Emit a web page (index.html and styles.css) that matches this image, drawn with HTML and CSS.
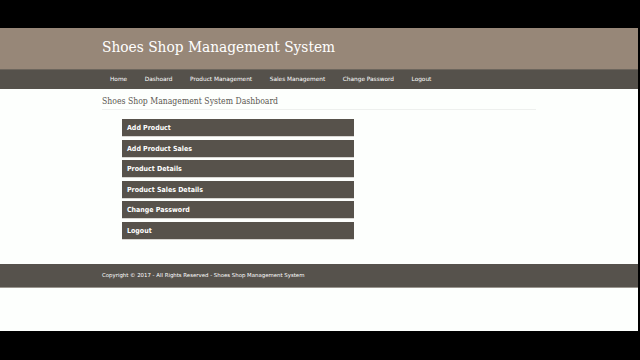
FILE: index.html
```html
<!DOCTYPE html>
<html lang="en">
<head>
  <meta charset="UTF-8" />
  <title>Shoes Shop Management System</title>
  <link rel="stylesheet" href="styles.css">
</head>
<body>
  <div class="frame">
    <div class="page">
      <div class="header">
        <div class="wrap"><h1>Shoes Shop Management System</h1></div>
      </div>
      <div class="nav">
        <div class="wrap">
          <a href="#">Home</a>
          <a href="#">Dashoard</a>
          <a href="#">Product Management</a>
          <a href="#">Sales Management</a>
          <a href="#">Change Password</a>
          <a href="#">Logout</a>
        </div>
      </div>
      <div class="content">
        <div class="wrap">
          <h2>Shoes Shop Management System Dashboard</h2>
          <div class="menu">
            <a href="#">Add Product</a>
            <a href="#">Add Product Sales</a>
            <a href="#">Product Details</a>
            <a href="#">Product Sales Details</a>
            <a href="#">Change Password</a>
            <a href="#">Logout</a>
          </div>
        </div>
      </div>
      <div class="footer">
        <div class="wrap">Copyright &copy; 2017 - All Rights Reserved - Shoes Shop Management System</div>
      </div>
      <div class="bottom"></div>
    </div>
  </div>
</body>
</html>
```

FILE: styles.css
```css
html, body {
  margin: 0;
  padding: 0;
  background: #000;
}

.frame {
  padding: 28px 2px 29px 0;
  height: 303px;
}

.page {
  background: #fdfffd;
  height: 303px;
  font-family: "DejaVu Sans", Verdana, sans-serif;
}

.wrap {
  margin-left: 102px;
  width: 434px;
}

.header {
  background: #978778;
  height: 41px;
  box-sizing: border-box;
  padding-top: 8.5px;
}

.header h1 {
  margin: 0;
  color: #fff;
  font-family: "DejaVu Serif", Georgia, serif;
  font-stretch: condensed;
  font-weight: normal;
  font-size: 15.3px;
  line-height: 20px;
}

.nav {
  background: #55514b;
  height: 20px;
  border-top: 1px solid #6d665d;
  box-sizing: border-box;
}

.nav .wrap {
  display: flex;
}

.nav a {
  color: #fff;
  text-decoration: none;
  font-size: 5.8px;
  line-height: 19px;
  padding: 0 8.8px;
}

.nav a:first-child {
  padding-left: 8px;
}

.content {
  height: 175px;
  box-sizing: border-box;
  padding-top: 6px;
}

.content h2 {
  margin: 0;
  font-family: "DejaVu Serif", Georgia, serif;
  font-stretch: condensed;
  font-weight: normal;
  font-size: 8.6px;
  color: #5a5650;
  line-height: 12px;
  padding-bottom: 2px;
  border-bottom: 1px solid #eef0ee;
}

.menu {
  margin: 9px 0 0 20px;
  width: 232px;
  display: flex;
  flex-direction: column;
  gap: 2.6px;
}

.menu a {
  display: block;
  background: #57524b;
  color: #fff;
  text-decoration: none;
  font-weight: bold;
  font-stretch: condensed;
  font-size: 7px;
  height: 17px;
  line-height: 18px;
  padding-left: 5px;
  border-bottom: 1px solid #d8d6d2;
}

.footer {
  background: #56524c;
  height: 24px;
  border-bottom: 1px solid #9a968f;
  box-sizing: border-box;
  color: #fff;
  font-size: 5.4px;
  line-height: 23px;
}

.bottom {
  height: 43px;
}
```
